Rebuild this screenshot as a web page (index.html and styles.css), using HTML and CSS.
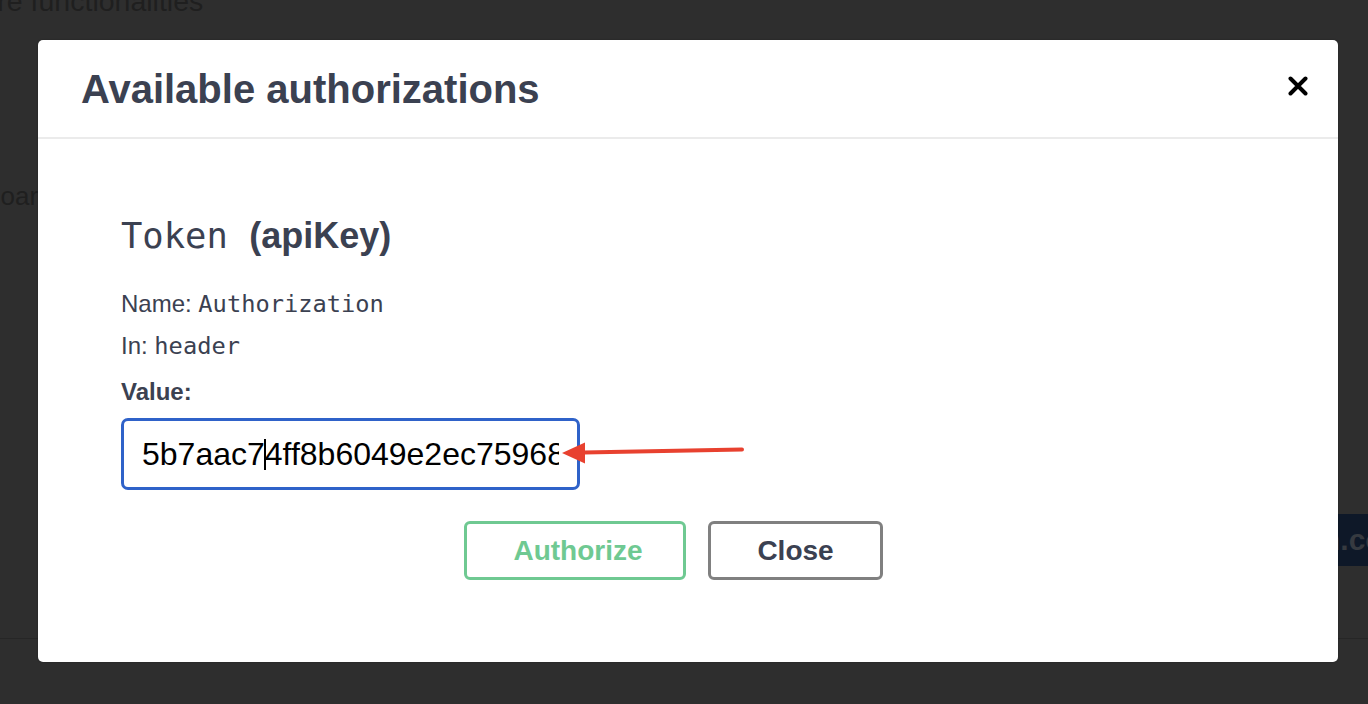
FILE: index.html
```html
<!DOCTYPE html>
<html>
<head>
<meta charset="utf-8">
<link rel="stylesheet" href="styles.css">
</head>
<body>
<div class="page">
  <div class="bg-line1">ire functionalities</div>
  <div class="bg-line2">board</div>
  <div class="bg-row"><div class="bg-badge">n.com</div></div>
  <div class="bg-rule"></div>
</div>

<div class="modal">
  <div class="modal-header">
    <h3 class="title">Available authorizations</h3>
    <button class="close-x" aria-label="close">
      <svg width="20" height="20" viewBox="0 0 20 20"><path d="M2.5 2.5 L17.5 17.5 M17.5 2.5 L2.5 17.5" stroke="#000" stroke-width="4" stroke-linecap="round"/></svg>
    </button>
  </div>
  <div class="modal-body">
    <h4 class="scheme"><code class="scheme-name">Token&nbsp;</code>(apiKey)</h4>
    <p class="meta">Name: <code class="mono">Authorization</code></p>
    <p class="meta">In: <code class="mono">header</code></p>
    <label class="value-label">Value:</label>
    <div class="value-wrap">
      <div class="value-input">
        <div class="value-clip"><span>5b7aac7</span><span class="caret"></span><span>4ff8b6049e2ec759685a1</span></div>
      </div>
      <svg class="arrow" width="190" height="30" viewBox="0 0 190 30"><path d="M24 14.5 L182 11.5" stroke="#e8412f" stroke-width="4" stroke-linecap="round"/><path d="M2 15 L25 4.5 L25 25.5 Z" fill="#e8412f"/></svg>
    </div>
    <div class="btn-row">
      <button class="btn btn-auth">Authorize</button>
      <button class="btn btn-close">Close</button>
    </div>
  </div>
</div>
</body>
</html>
```
FILE: styles.css
```css
html, body {
  margin: 0;
  padding: 0;
}
body {
  background: #2e2e2e;
  font-family: "Liberation Sans", Arial, sans-serif;
  width: 1368px;
  height: 704px;
  overflow: hidden;
  position: relative;
}
.page {
  height: 704px;
  color: #1f1f1f;
  font-size: 26px;
}
.bg-line1 {
  margin-top: -14px;
  text-indent: -9px;
  line-height: 31px;
  font-size: 28.5px;
}
.bg-line2 {
  margin-top: 164px;
  text-indent: -14px;
  line-height: 30px;
}
.bg-row {
  display: flex;
  justify-content: flex-end;
  margin-top: 303px;
}
.bg-badge {
  width: 60px;
  height: 52px;
  margin-right: -30px;
  background: #0e1828;
  color: #363a40;
  font-weight: bold;
  font-size: 30px;
  line-height: 52px;
  text-indent: -16px;
  overflow: hidden;
  white-space: nowrap;
}
.bg-rule {
  margin-top: 72px;
  height: 1px;
  background: #262626;
}

.modal {
  position: absolute;
  left: 38px;
  top: 40px;
  width: 1300px;
  background: #fff;
  border-radius: 5px;
  box-shadow: 0 0 2px rgba(0,0,0,0.3);
}
.modal-header {
  display: flex;
  align-items: center;
  justify-content: space-between;
  height: 97px;
  padding: 0 30px 0 43px;
  border-bottom: 2px solid #ebebeb;
}
.title {
  margin: 0;
  font-size: 40px;
  font-weight: bold;
  color: #3b4151;
  line-height: 97px;
  padding-top: 2px;
}
.close-x {
  border: 0;
  background: none;
  padding: 0;
  width: 20px;
  height: 20px;
  margin-top: -6px;
  display: flex;
}
.modal-body {
  padding: 75px 83px 82px;
}
.scheme {
  margin: 0;
  font-size: 36px;
  line-height: 44px;
  font-weight: bold;
  color: #3b4151;
}
.scheme-name {
  font-family: "DejaVu Sans Mono", monospace;
  font-weight: normal;
  font-size: 35.5px;
}
.meta {
  margin: 0;
  font-size: 24px;
  line-height: 42px;
  color: #3b4151;
}
.scheme + .meta {
  margin-top: 25px;
}
.mono {
  font-family: "DejaVu Sans Mono", monospace;
  font-size: 23.7px;
}
.value-label {
  display: block;
  margin-top: 4px;
  font-size: 24px;
  line-height: 42px;
  font-weight: bold;
  color: #3b4151;
}
.value-wrap {
  position: relative;
  margin-top: 5px;
}
.value-input {
  box-sizing: border-box;
  width: 459px;
  height: 72px;
  border: 3px solid #2f62c9;
  border-radius: 7px;
  padding: 0 18px;
  display: flex;
  align-items: center;
}
.value-clip {
  overflow: hidden;
  white-space: nowrap;
  width: 100%;
  font-size: 32px;
  color: #000;
  line-height: 40px;
  display: flex;
  align-items: center;
}
.caret {
  display: inline-block;
  width: 1.5px;
  height: 31px;
  background: #000;
  margin: 0 -0.75px;
  flex: none;
}
.arrow {
  position: absolute;
  left: 439px;
  top: 20px;
}
.btn-row {
  display: flex;
  justify-content: center;
  gap: 22px;
  margin-top: 31px;
  padding-right: 29px;
}
.btn {
  box-sizing: border-box;
  height: 59px;
  border-radius: 6px;
  background: #fff;
  font-family: "Liberation Sans", Arial, sans-serif;
  font-weight: bold;
  font-size: 28px;
  padding: 0;
  cursor: pointer;
}
.btn-auth {
  width: 222px;
  border: 3px solid #6fc992;
  color: #6fc992;
  padding-left: 6px;
}
.btn-close {
  width: 175px;
  border: 3px solid #808080;
  color: #3b4151;
}
```
